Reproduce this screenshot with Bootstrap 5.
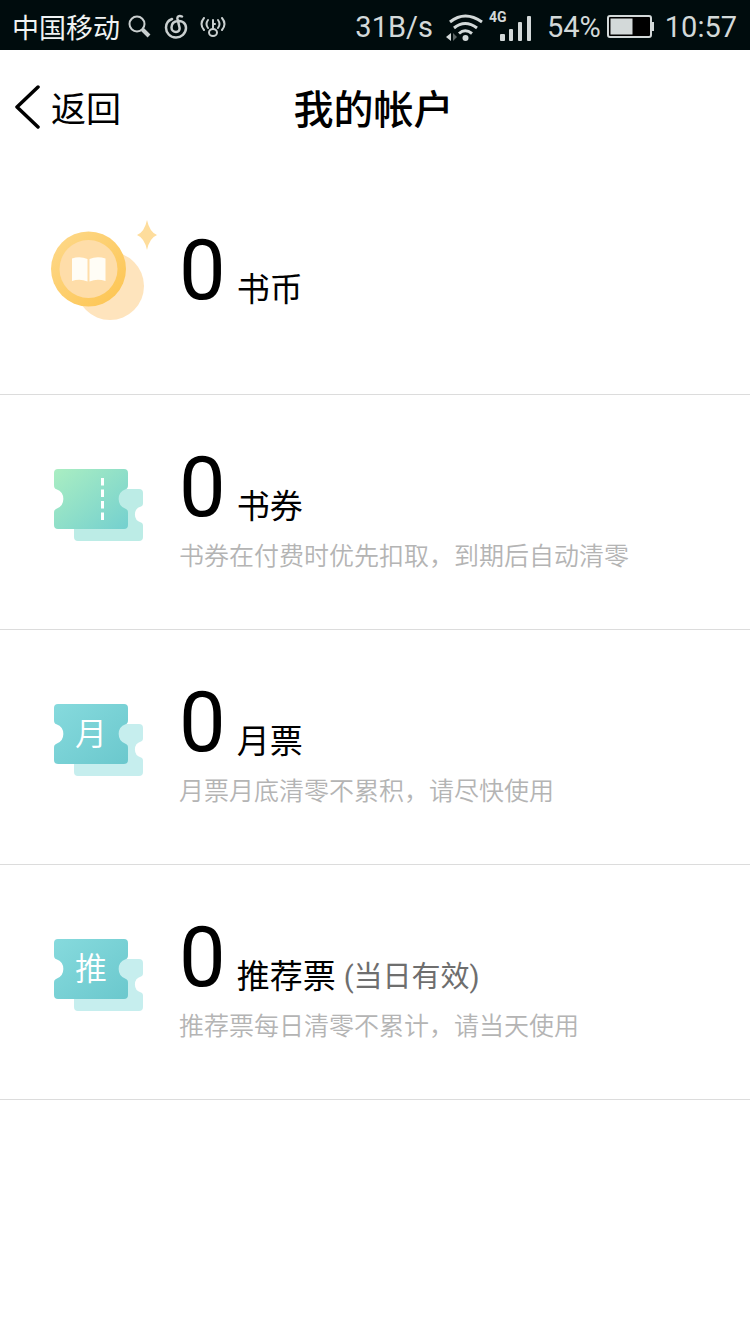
<!DOCTYPE html>
<html lang="zh-CN">
<head>
<meta charset="utf-8">
<meta name="viewport" content="width=device-width, initial-scale=1">
<title>我的帐户</title>
<link href="https://cdn.jsdelivr.net/npm/bootstrap@5.3.0/dist/css/bootstrap.min.css" rel="stylesheet">
<style>
body { font-family: Roboto, "Noto Sans CJK SC", sans-serif; color: #000; background: #fff; }
.carrier, .top-bar, .back-btn, .hint { font-family: "Noto Sans CJK SC", sans-serif; }
.status-bar { height: 50px; background: #000c0d; color: #d3d9d9; font-size: 29px; line-height: 48px; padding: 4px 13px 0 12px; white-space: nowrap; }
.status-group { gap: 10px; }
.battery { gap: 6px; }
.status-icons { gap: 12px; }
.carrier { font-size: 27px; line-height: 44px; color: #f0f3f3; }
.top-bar { height: 110px; padding: 4px 18px 0 15px; }
.back-btn { font-size: 35px; line-height: 48px; gap: 11px; color: #000; }
.page-title { font-size: 40px; line-height: 48px; font-weight: 500; }
.account-row { min-height: 235px; padding: 0 24px 14px 51px; gap: 22px; border-bottom: 1px solid #dcdcdc; }
.balance { padding-top: 2px; }
.amount { font-size: 83px; line-height: 96px; }
.unit { font-size: 33px; line-height: 58px; margin-left: 11px; }
.validity { font-size: 29px; line-height: 58px; color: #6e6e6e; }
.hint { font-size: 25px; line-height: 36px; color: #b4b4b4; font-weight: 350; }
</style>
</head>
<body>
<svg width="0" height="0" class="d-block" aria-hidden="true">
  <defs>
    <linearGradient id="gold" x1="0" y1="0" x2="1" y2="1"><stop offset="0" stop-color="#fdd98c"/><stop offset="1" stop-color="#fdc44f"/></linearGradient>
    <linearGradient id="mint" x1="0" y1="0" x2="1" y2="1"><stop offset="0" stop-color="#aaeec2"/><stop offset="1" stop-color="#74d0cf"/></linearGradient>
    <linearGradient id="teal" x1="0" y1="0" x2="1" y2="1"><stop offset="0" stop-color="#86dadd"/><stop offset="1" stop-color="#6bc8cd"/></linearGradient>
    <path id="ticket-front" d="M4 0H70Q74 0 74 4V16C74 18.500 73.500 19.500 71.500 20.300A10.300 10.300 0 0 0 71.500 39.700C73.500 40.500 74 41.500 74 44V56Q74 60 70 60H4Q0 60 0 56V44C0 41.500 .5 40.500 2.500 39.700A10.300 10.300 0 0 0 2.500 20.300C.5 19.500 0 18.500 0 16V4Q0 0 4 0Z"/>
    <path id="ticket-back" d="M66 20H85Q89 20 89 24V34C89 36 88.500 37 87 37.500A8.300 8.300 0 0 0 87 53.500C88.500 54 89 55 89 57V68Q89 72 85 72H24Q20 72 20 68V58H64V20Z"/>
  </defs>
</svg>

<div class="status-bar d-flex align-items-center justify-content-between">
  <div class="d-flex align-items-center">
    <span class="carrier">中国移动</span>
    <div class="status-icons d-flex align-items-center ms-2">
      <svg width="24" height="24" viewBox="0 0 24 24" fill="none" stroke="#c9cfcf"><circle cx="9" cy="9" r="7.500" stroke-width="2"/><path d="M14.500 14.500 21 21" stroke-width="4"/></svg>
      <svg width="24" height="26" viewBox="0 0 24 26" fill="none" stroke="#c9cfcf" stroke-width="2.500" stroke-linecap="round"><path d="M8 5C4 6.500 2 10 2 13.500A10 9.800 0 0 0 22 14C22 9 18 6.500 14 7C9.500 7.500 7.500 10 7.500 13.500C7.500 16 9.500 18 12 18S16 16 15.500 13.500L13.500 5C13 2.500 15 1 18 2.500"/></svg>
      <svg width="26" height="24" viewBox="0 0 26 24" fill="none" stroke="#c9cfcf" stroke-width="2" stroke-linecap="round"><path d="M4 3Q-1 9 4 15M8 5Q5 9 8 13M22 3Q27 9 22 15M18 5Q21 9 18 13M13 13V5M13 9H15"/><ellipse cx="13" cy="17.500" rx="4" ry="3.500"/></svg>
    </div>
  </div>
  <div class="status-group d-flex align-items-center">
    <span>31B/s</span>
    <svg width="90" height="36" viewBox="-2 -1 90 36" fill="#d3d9d9">
      <g fill="none" stroke="#d3d9d9" stroke-width="3"><path d="M5 12Q20 0 37 12M9 18Q20 9 32 18M14 23.500Q20 18 27 23.500"/></g>
      <circle cx="20.500" cy="28" r="3"/><path d="M6 23V31L1 27Z"/><path d="M8 23V31L12 27Z" fill="#5c6565"/>
      <text x="44" y="12" font-size="14" font-weight="700">4G</text>
      <rect x="55" y="24" width="5" height="7" rx="1"/><rect x="64" y="19" width="4" height="12" rx="1"/><rect x="73" y="12" width="4" height="19" rx="1"/><rect x="82" y="6" width="4" height="25" rx="1"/>
    </svg>
    <div class="battery d-flex align-items-center ms-1">
      <span>54%</span>
      <svg width="48" height="24" viewBox="0 0 48 24"><rect x="1" y="1" width="43" height="21" rx="2" fill="#000" stroke="#d3d9d9" stroke-width="2"/><rect x="3.500" y="3.500" width="22" height="16" fill="#d3d9d9"/><path d="M45 7h2v9h-2z" fill="#d3d9d9"/></svg>
    </div>
    <span>10:57</span>
  </div>
</div>

<header class="top-bar d-flex align-items-center">
  <div class="flex-fill w-25">
    <button type="button" class="back-btn btn border-0 p-0 d-flex align-items-center">
      <svg width="25" height="44" viewBox="0 0 25 44" fill="none" stroke="#000" stroke-width="3.500" stroke-linecap="round" stroke-linejoin="round"><path d="M23 2 2 22 23 42"/></svg>
      <span>返回</span>
    </button>
  </div>
  <h1 class="page-title m-0">我的帐户</h1>
  <div class="flex-fill w-25"></div>
</header>

<main>
  <section class="account-row d-flex align-items-center">
    <svg class="flex-shrink-0" width="106" height="100" viewBox="0 0 106 100">
      <circle cx="59" cy="66" r="34" fill="#fee4bd"/><circle cx="37.500" cy="49" r="37.500" fill="url(#gold)"/><circle cx="37.500" cy="49" r="29" fill="#fedda9"/>
      <path d="M21 38.500Q29 36 36.500 39V61.500Q29 58.500 21 61ZM38.500 39Q46 36 54.500 38.500V61Q46 58.500 38.500 61.500Z" fill="#fffdf6"/>
      <path d="M96 0Q98.500 12 106 15Q98.500 18 96 30Q93.500 18 86 15Q93.500 12 96 0Z" fill="#fedd9c"/>
    </svg>
    <div class="balance d-flex align-items-end"><span class="amount">0</span><span class="unit">书币</span></div>
  </section>

  <section class="account-row d-flex align-items-center">
    <svg class="flex-shrink-0" width="106" height="72" viewBox="-3 0 106 72">
      <use href="#ticket-back" fill="#bcece6"/><use href="#ticket-front" fill="url(#mint)"/>
      <path d="M48.500 9V51" stroke="#fff" stroke-width="3" stroke-dasharray="7.500 4"/>
    </svg>
    <div>
      <div class="balance d-flex align-items-end"><span class="amount">0</span><span class="unit">书券</span></div>
      <div class="hint">书券在付费时优先扣取，到期后自动清零</div>
    </div>
  </section>

  <section class="account-row d-flex align-items-center">
    <svg class="flex-shrink-0" width="106" height="72" viewBox="-3 0 106 72">
      <use href="#ticket-back" fill="#c6eeee"/><use href="#ticket-front" fill="url(#teal)"/>
      <text x="37" y="41" font-size="32" font-weight="350" text-anchor="middle" fill="#fff">月</text>
    </svg>
    <div>
      <div class="balance d-flex align-items-end"><span class="amount">0</span><span class="unit">月票</span></div>
      <div class="hint">月票月底清零不累积，请尽快使用</div>
    </div>
  </section>

  <section class="account-row d-flex align-items-center">
    <svg class="flex-shrink-0" width="106" height="72" viewBox="-3 0 106 72">
      <use href="#ticket-back" fill="#c6eeee"/><use href="#ticket-front" fill="url(#teal)"/>
      <text x="37" y="41" font-size="32" font-weight="350" text-anchor="middle" fill="#fff">推</text>
    </svg>
    <div>
      <div class="balance d-flex align-items-end"><span class="amount">0</span><span class="unit">推荐票</span><span class="validity ms-2">(当日有效)</span></div>
      <div class="hint">推荐票每日清零不累计，请当天使用</div>
    </div>
  </section>
</main>
<script src="https://cdn.jsdelivr.net/npm/bootstrap@5.3.0/dist/js/bootstrap.bundle.min.js"></script>
</body>
</html>
